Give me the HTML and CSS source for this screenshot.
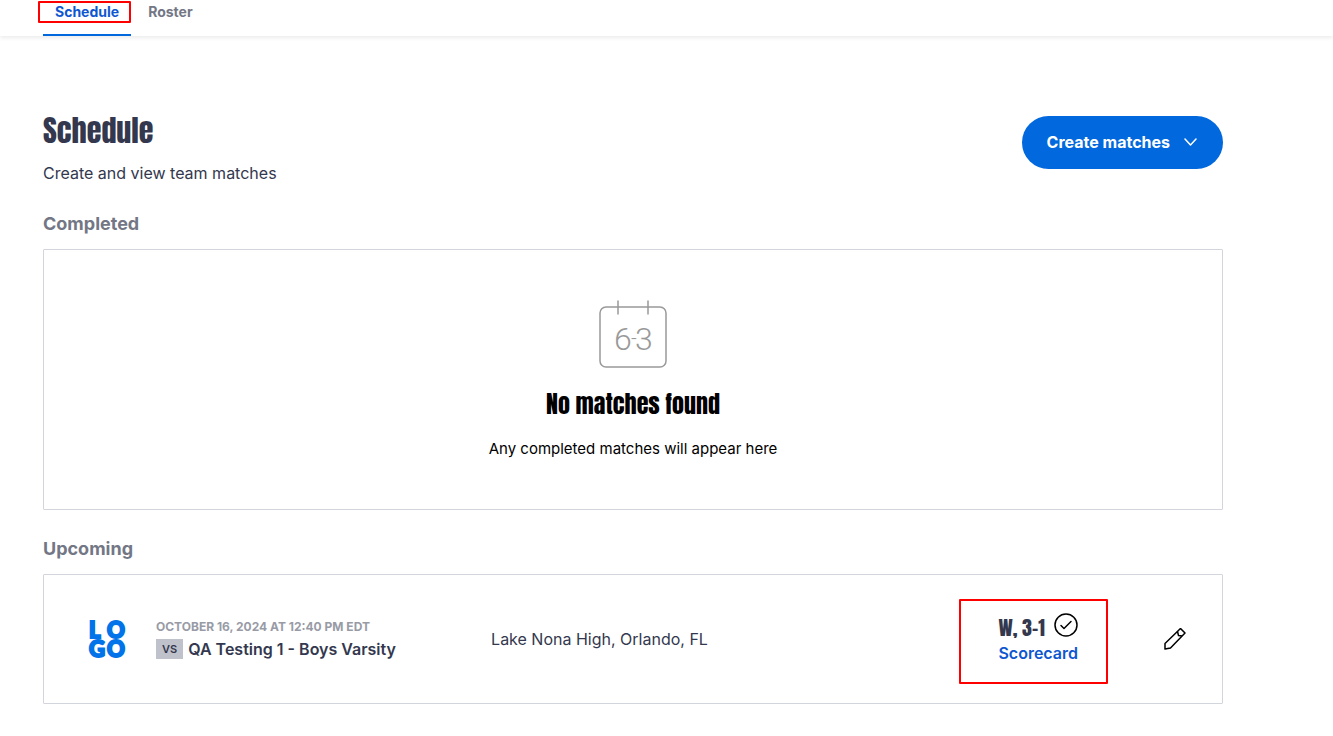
FILE: index.html
```html
<!DOCTYPE html>
<html lang="en">

<head>
  <meta charset="UTF-8">
  <meta name="viewport" content="width=device-width, initial-scale=1.0">
  <title>Schedule</title>
  <link rel="stylesheet" href="styles.css">
</head>

<body>

  <nav class="tabs">
    <a class="tab tab-active" href="#schedule">Schedule<span class="tab-highlight"></span></a>
    <a class="tab" href="#roster">Roster</a>
  </nav>

  <main class="page">
    <header class="page-header">
      <div>
        <h1>Schedule</h1>
        <p class="subtitle">Create and view team matches</p>
      </div>
      <button type="button" class="btn-create">
        Create matches
        <svg width="13" height="8" viewBox="0 0 13 8" fill="none" stroke="currentColor" stroke-width="1.5" stroke-linecap="round" stroke-linejoin="round">
          <path d="M1 1l5.500 6L12 1" />
        </svg>
      </button>
    </header>

    <section>
      <h2>Completed</h2>
      <div class="card empty">
        <svg class="empty-icon" width="68" height="68" viewBox="0 0 68 68" fill="none" stroke="#999" stroke-width="1.5">
          <rect x="1" y="7" width="66" height="60" rx="6" />
          <path d="M19 0.500v14M49 0.500v14" />
          <text class="empty-score" x="15" y="50" fill="#999" stroke="none">6<tspan class="empty-dash" x="32" y="45">-</tspan><tspan x="36" y="50">3</tspan></text>
        </svg>
        <h3>No matches found</h3>
        <p>Any completed matches will appear here</p>
      </div>
    </section>

    <section>
      <h2>Upcoming</h2>
      <div class="card match">
        <div class="match-team">
          <div class="logo">
            <svg width="40" height="40" viewBox="0 0 40 40" fill="#0273e9" stroke="#0273e9" stroke-width="2">
              <text class="logo-letter" x="1 19" y="19">LO</text>
              <text class="logo-letter" x="1 19" y="38">GO</text>
            </svg>
          </div>
          <div class="match-info">
            <p class="match-date">OCTOBER 16, 2024 AT 12:40 PM EDT</p>
            <p class="match-name"><span class="vs">VS</span>QA Testing 1 - Boys Varsity</p>
          </div>
        </div>
        <p class="match-place">Lake Nona High, Orlando, FL</p>
        <div class="match-result">
          <div class="score">
            <span>W, 3-1</span>
            <svg width="24" height="24" viewBox="0 0 24 24" fill="none" stroke="#000" stroke-width="1.5" stroke-linecap="round" stroke-linejoin="round">
              <circle cx="12" cy="12" r="11" />
              <path d="M7 12.500l3 3 7-7" />
            </svg>
          </div>
          <a href="#scorecard">Scorecard</a>
          <span class="result-highlight"></span>
        </div>
        <button type="button" class="btn-edit" aria-label="Edit match">
          <svg width="22" height="22" viewBox="0 0 22 22" fill="none" stroke="#000" stroke-width="1.5" stroke-linejoin="round">
            <path d="M1 21v-5.500L16.500 0.500 21 5 6.500 20z" />
            <path d="M13.500 3.500l1 4 3.500 0.500" />
          </svg>
        </button>
      </div>
    </section>
  </main>

</body>

</html>
```
FILE: styles.css
```css
* {
  box-sizing: border-box;
}

body {
  margin: 0;
  font-family: Inter, sans-serif;
  color: #33384e;
  background: #fff;
}

h1, h2, h3, p {
  margin: 0;
}

.tabs {
  display: flex;
  gap: 5px;
  height: 36px;
  padding-left: 43px;
  box-shadow: 0 2px 4px rgba(0, 0, 0, 0.08);
}

.tab {
  position: relative;
  padding: 2px 12px 0;
  font-size: 14px;
  font-weight: 700;
  line-height: 20px;
  color: #737785;
  text-decoration: none;
}

.tab-active {
  color: #0f57d0;
  border-bottom: 2px solid #0268dd;
}

.tab-highlight {
  position: absolute;
  top: 1px;
  left: -5px;
  right: 0;
  height: 22px;
  border: 2px solid #f00;
  border-radius: 1px;
}

.page {
  padding: 76px 110px 32px 43px;
}

.page-header {
  display: flex;
  justify-content: space-between;
  align-items: flex-start;
}

h1, h3, .score {
  font-family: Anton, "Liberation Sans Narrow", "Liberation Sans", sans-serif;
  font-weight: 400;
}

h1 {
  font-size: 30px;
  line-height: 38px;
}

.subtitle {
  margin-top: 11px;
  font-size: 16px;
  line-height: 24px;
}

.btn-create {
  display: flex;
  align-items: center;
  gap: 14px;
  margin-top: 4px;
  padding: 0 26px 1px 25px;
  height: 53px;
  border: none;
  border-radius: 27px;
  background: #0268dd;
  color: #fff;
  font-family: inherit;
  font-size: 16px;
  font-weight: 700;
  cursor: pointer;
}

h2 {
  margin: 26px 0 13px;
  font-size: 18px;
  font-weight: 700;
  line-height: 25px;
  color: #737785;
}

.card {
  border: 1px solid #d3d5dc;
  border-radius: 1px;
}

.empty {
  display: flex;
  flex-direction: column;
  align-items: center;
  padding: 50px 24px 48px;
  color: #000;
}

.empty-score {
  font-family: Roboto, sans-serif;
  font-size: 32px;
  font-weight: 300;
}

.empty-dash {
  font-size: 20px;
}

.empty h3 {
  margin-top: 20px;
  font-size: 24px;
  line-height: 32px;
}

.empty p {
  margin-top: 17px;
  font-size: 15px;
  line-height: 24px;
}

.match {
  display: grid;
  grid-template-columns: 9fr 11fr auto auto;
  align-items: center;
  padding: 32px 36px 32px 32px;
}

.match-team {
  display: flex;
  align-items: center;
  gap: 16px;
}

.logo {
  display: flex;
  align-items: center;
  justify-content: center;
  width: 64px;
  height: 64px;
}

.logo svg {
  overflow: visible;
}

.logo-letter {
  font-family: Lato, sans-serif;
  font-size: 22px;
  font-weight: 900;
}

.match-info {
  padding-top: 2px;
}

.match-date {
  font-size: 12px;
  font-weight: 700;
  line-height: 18px;
  color: #989ba6;
}

.match-name {
  display: flex;
  align-items: center;
  gap: 5px;
  font-size: 16px;
  font-weight: 600;
  line-height: 26px;
}

.vs {
  padding: 0 6px;
  background: #c0c2cb;
  font-size: 11px;
  font-weight: 600;
  line-height: 20px;
}

.match-place {
  font-size: 16px;
}

.match-result {
  position: relative;
  margin-right: 86px;
}

.result-highlight {
  position: absolute;
  top: -14px;
  right: -30px;
  bottom: -19px;
  left: -39px;
  border: 2px solid #f00;
  border-radius: 1px;
  pointer-events: none;
}

.score {
  display: flex;
  justify-content: space-between;
  font-size: 20px;
  line-height: 29px;
}

.match-result a {
  display: block;
  font-size: 16px;
  font-weight: 600;
  line-height: 23px;
  color: #0f57d0;
  text-decoration: none;
}

.btn-edit {
  display: flex;
  padding: 0;
  border: none;
  background: none;
  cursor: pointer;
}
```
